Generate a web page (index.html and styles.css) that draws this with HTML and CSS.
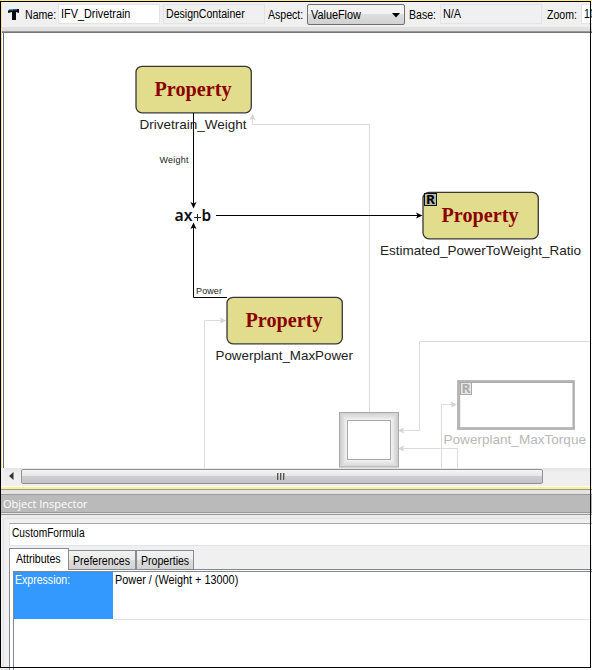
FILE: index.html
```html
<!DOCTYPE html>
<html lang="en">
<head>
<meta charset="utf-8">
<title>IFV_Drivetrain</title>
<link rel="stylesheet" href="styles.css">
</head>
<body>
<div class="window">
  <section class="editor">
    <header class="toolbar">
      <svg class="logo" width="12" height="12" viewBox="0 0 12 12"><path d="M0 4V2Q1 0 3 0H11V4L8 3V11H4V3L0 4Z" fill="#080b12"/><path d="M1 .7H5" stroke="#2caaa0" stroke-width="1.4"/><path d="M5 .7H9" stroke="#295aa8" stroke-width="1.4"/></svg>
      <span class="label name-label"><span class="t">Name:</span></span>
      <div class="field name"><span class="t wide">IFV_Drivetrain</span></div>
      <div class="field kind"><span class="t">DesignContainer</span></div>
      <span class="label aspect-label"><span class="t">Aspect:</span></span>
      <div class="select"><span class="t wide">ValueFlow</span><svg width="8" height="5" viewBox="0 0 8 5"><path d="M0 0H8L4 4.5Z"/></svg></div>
      <span class="label base-label"><span class="t">Base:</span></span>
      <div class="field base"><span class="t wide">N/A</span></div>
      <span class="label zoom-label"><span class="t">Zoom:</span></span>
      <div class="field zoom"><span class="t">100%</span></div>
    </header>
    <div class="toolbar-edge"></div>
    <main class="canvas">
      <svg width="588" height="435" viewBox="3 33 588 435">
        <defs>
          <linearGradient id="v" x2="0" y2="1"><stop stop-color="#cfcfcf"/><stop offset=".14" stop-color="#f5f5f5"/><stop offset=".86" stop-color="#f5f5f5"/><stop offset="1" stop-color="#d2d2d2"/></linearGradient>
          <linearGradient id="l"><stop stop-color="#cbcbcb"/><stop offset="1" stop-color="#fafafa"/></linearGradient>
          <linearGradient id="r"><stop stop-color="#fafafa"/><stop offset="1" stop-color="#cbcbcb"/></linearGradient>
        </defs>
        <path d="M3.500 33V468" stroke="#6b6b73"/>
        <g class="faint-line">
          <path d="M369.500 413V124.500H252.500V116"/>
          <path d="M204.500 468V320.500H225"/>
          <path d="M592 341.500H419.500V430.500H400"/>
          <path d="M457.500 468V448.500H400"/>
          <path d="M441.500 468V404.500H456"/>
        </g>
        <g class="faint-arrow">
          <path d="M252.500 114L255.500 120L252.500 119L249.500 120Z"/>
          <path d="M226 320.500L220 317.500L221 320.500L220 323.500Z"/>
          <path d="M398 430.500L404 427.500L403 430.500L404 433.500Z"/>
          <path d="M398 448.500L404 445.500L403 448.500L404 451.500Z"/>
          <path d="M457 404.500L451 401.500L452 404.500L451 407.500Z"/>
        </g>
        <g class="property">
          <rect x="136" y="66.300" width="115.300" height="46.500" rx="6"/>
          <rect x="227" y="297.300" width="115.300" height="46.500" rx="6"/>
          <rect x="423" y="192.300" width="115.300" height="46.500" rx="6"/>
          <text x="154.500" y="96" textLength="77" lengthAdjust="spacingAndGlyphs">Property</text>
          <text x="245.500" y="327" textLength="77" lengthAdjust="spacingAndGlyphs">Property</text>
          <text x="441.500" y="222" textLength="77" lengthAdjust="spacingAndGlyphs">Property</text>
        </g>
        <g class="caption">
          <text x="139.500" y="128.500" textLength="107" lengthAdjust="spacingAndGlyphs">Drivetrain_Weight</text>
          <text x="215.500" y="359.500" textLength="137.500" lengthAdjust="spacingAndGlyphs">Powerplant_MaxPower</text>
          <text x="380" y="254.500" textLength="201" lengthAdjust="spacingAndGlyphs">Estimated_PowerToWeight_Ratio</text>
          <text class="dim" x="443.500" y="443.500" textLength="142.500" lengthAdjust="spacingAndGlyphs">Powerplant_MaxTorque</text>
        </g>
        <g class="port">
          <text x="159.500" y="163" textLength="29">Weight</text>
          <text x="196" y="294" textLength="26">Power</text>
        </g>
        <g class="wire">
          <path d="M193.500 113V207"/>
          <path d="M227 297.500H193.500V224"/>
          <path d="M216 215.500H421"/>
        </g>
        <g class="arrow">
          <path d="M193.500 208.500L190.500 202L193.500 203.500L196.500 202Z"/>
          <path d="M193.500 222.500L190.500 229L193.500 227.500L196.500 229Z"/>
          <path d="M422.500 215.500L416 212.500L417.500 215.500L416 218.500Z"/>
        </g>
        <text class="formula" x="174.500" y="221" textLength="18" lengthAdjust="spacingAndGlyphs">ax</text>
        <path d="M194 217.500H201M197.500 214V221" stroke="#222"/>
        <text class="formula" x="201.500" y="221">b</text>
        <rect x="424.500" y="193.500" width="12" height="12" fill="#b7b9ae" stroke="#111"/>
        <text class="ref" x="426" y="204" textLength="9" lengthAdjust="spacingAndGlyphs">R</text>
        <rect x="458" y="381" width="116" height="48" fill="#dedede" stroke="#aaa" stroke-width="1.600"/>
        <rect x="459.700" y="382.500" width="113.300" height="45.300" fill="#fff" stroke="#aaa"/>
        <rect x="460.500" y="382.500" width="11" height="12" fill="#e6e6e6" stroke="#aaa"/>
        <text class="ref off" x="461.500" y="393" textLength="9" lengthAdjust="spacingAndGlyphs">R</text>
        <rect x="340" y="413" width="58" height="54" fill="url(#v)"/>
        <path d="M340 413L348 421V459L340 467Z" fill="url(#l)"/>
        <path d="M398 413L390 421V459L398 467Z" fill="url(#r)"/>
        <rect x="339.500" y="412.500" width="59" height="54.500" fill="none" stroke="#aaa"/>
        <rect x="347.500" y="420.500" width="43" height="39" fill="#fff" stroke="#a8a8a8"/>
      </svg>
    </main>
    <div class="scrollbar">
      <svg class="prev" width="5" height="8" viewBox="0 0 5 8"><path d="M4.500 0V8L0 4Z" fill="#333"/></svg>
      <div class="thumb"><i></i><i></i><i></i></div>
    </div>
    <div class="scroll-edge"></div>
  </section>
  <div class="splitter"></div>
  <section class="inspector">
    <h1><span>Object Inspector</span></h1>
    <div class="gap"></div>
    <div class="panel">
      <div class="object-name"><span class="t slim">CustomFormula</span></div>
      <nav class="tabs">
        <div class="tab active"><span class="t">Attributes</span></div>
        <div class="tab prefs"><span class="t">Preferences</span></div>
        <div class="tab props"><span class="t">Properties</span></div>
      </nav>
      <div class="sheet">
        <div class="grid">
          <div class="key"><span class="t">Expression:</span></div>
          <div class="value"><span class="t wide">Power / (Weight + 13000)</span></div>
        </div>
      </div>
    </div>
  </section>
  <div class="frame"></div>
</div>
</body>
</html>
```

FILE: styles.css
```css
* { box-sizing: border-box; }
body { margin: 0; background: #fff; }
.window {
  position: relative; width: 592px; height: 670px; overflow: hidden;
  font: 12px/14px "Liberation Sans", Arial, sans-serif; color: #000; background: #f0f0f0;
}
.frame { position: absolute; left: 0; top: 1px; width: 591px; height: 667px; border: 1px solid #000; }
.t { display: inline-block; white-space: nowrap; transform: scaleX(.88); transform-origin: 0 50%; }
.t.wide { transform: scaleX(.905); }
.t.slim { transform: scaleX(.85); }

.editor { height: 490px; padding-left: 1px; border-top: 1px solid #fde983; }
.toolbar { display: flex; height: 26px; padding: 3px 0 0 7px; background: #f0f0f0; overflow: hidden; border-left: 1px solid #fde28b; }
.logo { flex: none; margin: 5px 5px 0 -1px; }
.label { flex: none; height: 20px; line-height: 22px; }
.name-label { width: 33px; }
.field { flex: none; height: 20px; padding: 1px 0 0 2px; border: 1px solid #e1e3e9; line-height: 17px; background: #f0f0f0; }
.name { width: 102px; background: #fff; }
.kind { width: 102px; margin-left: 3px; }
.aspect-label { width: 39px; margin-left: 3px; }
.select {
  flex: none; display: flex; align-items: center; justify-content: space-between; width: 98px; height: 21px;
  padding: 1px 4px 0 3px; border: 1px solid #707070; border-radius: 2px; background: linear-gradient(#f3f3f3 48%, #dedede 50%, #d1d1d1);
}
.base-label { width: 31px; margin-left: 4px; }
.base { width: 102px; }
.zoom-label { width: 34px; margin-left: 5px; }
.zoom { width: 50px; background: #fff; }
.toolbar-edge { height: 6px; border-left: 1px solid #fde28b; background: linear-gradient(#e0e0e0 4px, #999 4px 5px, #777 5px); }
.canvas { height: 435px; border-left: 1px solid #fde28b; background: #fff; }
.canvas svg { display: block; margin-left: 1px; }

.faint-line { fill: none; stroke: #dcdcdc; }
.faint-arrow { fill: #d4d4d4; }
.property rect { fill: #e2dd8d; stroke: #373737; stroke-width: 1.3; }
.property text { font: bold 20px "Liberation Serif", serif; fill: #8b0000; }
.caption { font-size: 13.5px; fill: #222; }
.caption .dim { fill: #b8b8b8; }
.port { font-size: 9px; fill: #222; }
.wire { fill: none; stroke: #000; }
.arrow { fill: #000; }
.formula { font: 600 15.5px "Noto Sans", sans-serif; fill: #111; }
.ref { font: bold 11.5px "Noto Sans", sans-serif; fill: #000; }
.ref.off { fill: #aaa; }

.scrollbar { display: flex; height: 17px; margin-left: 3px; padding: 1px 0; background: linear-gradient(#e5e5e5, #efefef 5px); }
.prev { flex: none; margin: 3px 7px 0 5px; }
.thumb {
  display: flex; justify-content: center; align-items: center; gap: 1px; width: 522px; height: 15px;
  padding-right: 3px; border: 1px solid #929292; border-radius: 2px; background: linear-gradient(#f5f5f5, #e6e6e8 45%, #cfcfd1 50%, #c3c3c5);
}
.thumb i { width: 2px; height: 7px; border-left: 1px solid #555; border-right: 1px solid #aaa; }
.scroll-edge { height: 5px; background: linear-gradient(#f0f0f0 1px, #fff 1px 2px, #fdf08a 2px 4px, #999 4px); }
.splitter { height: 4px; background: #e3e3e3; }

.inspector h1 {
  height: 19px; margin: 0; padding-left: 3px; border-top: 1px solid #999; border-bottom: 1px solid #999;
  background: #bababa; color: #fff; font: 11px/18px "Open Sans", sans-serif;
}
.gap { height: 5px; background: linear-gradient(#e4e4e4 1px, #999 1px 2px, #ebebeb 2px); }
.panel { height: 152px; margin-left: 3px; padding: 4px 0 0 5px; border: 1px solid #e5e0e0; border-right: 0; background: #f0f0f0; }
.object-name { height: 23px; padding: 2px 0 0 2px; border: 1px solid #e2e3ea; border-top-color: #a5a5aa; border-right: 0; background: #fff; }
.tabs { display: flex; align-items: flex-end; height: 23px; }
.tab { height: 19px; padding: 3px 0 0 4px; border: 1px solid #898c95; border-bottom: 0; background: linear-gradient(#f2f2f2, #eaeaea 48%, #dcdcdc 52%, #d2d2d2); }
.tab.active { z-index: 1; width: 60px; height: 22px; margin-bottom: -1px; padding: 3px 0 0 6px; background: #fff; }
.prefs { width: 67px; border-left: 0; }
.props { width: 58px; }
.sheet { height: 110px; padding: 1px 0 0 3px; border: 1px solid #808790; border-right: 0; background: #fff; }
.grid { display: flex; height: 108px; border: 1px solid #808790; border-right: 0; align-items: flex-start; }
.key { width: 99px; height: 47px; padding: 1px 0 0 1px; background: #3399ff; color: #fff; }
.value { flex: 1; height: 48px; padding: 1px 0 0 2px; border-bottom: 1px solid #e2e2e2; }
```
